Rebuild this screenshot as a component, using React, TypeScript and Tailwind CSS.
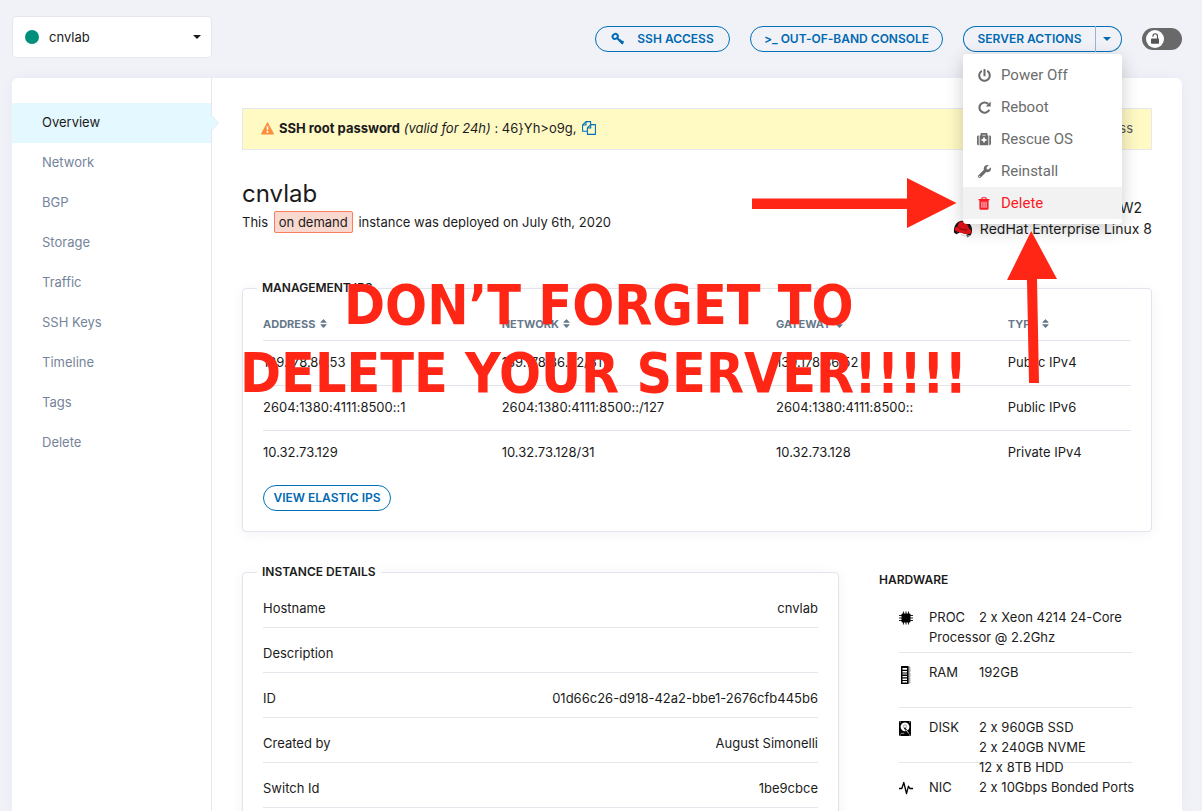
import type { ReactNode } from "react";
import { FaMedkit, FaPowerOff, FaSort, FaWrench } from "react-icons/fa";

const navItems = ["Overview", "Network", "BGP", "Storage", "Traffic", "SSH Keys", "Timeline", "Tags", "Delete"];

const addresses = [
  ["139.178.86.53", "139.178.86.52/31", "139.178.86.52", "Public IPv4"],
  ["2604:1380:4111:8500::1", "2604:1380:4111:8500::/127", "2604:1380:4111:8500::", "Public IPv6"],
  ["10.32.73.129", "10.32.73.128/31", "10.32.73.128", "Private IPv4"],
];

const details = [
  ["Hostname", "cnvlab"],
  ["Description", ""],
  ["ID", "01d66c26-d918-42a2-bbe1-2676cfb445b6"],
  ["Created by", "August Simonelli"],
  ["Switch Id", "1be9cbce"],
];

function KeyIcon() {
  return (
    <svg width="14" height="14" viewBox="0 0 14 14" fill="none" stroke="currentColor" aria-hidden="true">
      <ellipse cx="4.2" cy="4.4" rx="2.7" ry="2.3" strokeWidth="2" transform="rotate(-35 4.2 4.4)" />
      <path d="M6 6l6 5.6" strokeWidth="2.2" />
      <path d="M8.6 9.6l1.6-1.8M10.4 11.6l2-2.4" strokeWidth="1.8" />
    </svg>
  );
}

function UnlockIcon() {
  return (
    <svg width="10" height="12" viewBox="0 0 10 12" aria-hidden="true">
      <path d="M3 3.700V2.900a2.200 2.100 0 0 1 4.500 0V6" fill="none" stroke="currentColor" strokeWidth="1.200" />
      <rect x="1" y="5.600" width="8" height="5.200" rx=".7" fill="currentColor" />
    </svg>
  );
}

function RebootIcon() {
  return (
    <svg width="13" height="13" viewBox="0 0 13 13" fill="none" aria-hidden="true">
      <path d="M11.200 8.700A5.100 5.100 0 1 1 10.200 3" stroke="currentColor" strokeWidth="2.100" />
      <path d="M12.700.5v5H7.700z" fill="currentColor" />
    </svg>
  );
}

function TrashIcon() {
  return (
    <svg width="12" height="13" viewBox="0 0 12 13" fill="none" aria-hidden="true">
      <path d="M3.800 2.200V1.400q0-.7.7-.7h3q.7 0 .7.7v.8" stroke="currentColor" strokeWidth="1.100" />
      <path d="M.5 2h11v1.300h-.9v8.200q0 1.300-1.200 1.300H2.600q-1.200 0-1.200-1.300V3.300H.5z" fill="currentColor" />
      <path d="M3.900 4.800v6M6 4.800v6M8.100 4.800v6" stroke="#f2f2f2" strokeWidth=".9" />
    </svg>
  );
}

function CopyIcon() {
  return (
    <svg width="14" height="14" viewBox="0 0 14 14" fill="none" stroke="#0072bc" strokeWidth="1.100" strokeLinejoin="round" aria-hidden="true">
      <path d="M5.400 10.200H.6V4L4 .6h4.600v2.600" />
      <path d="M4 .6V4H.6" />
      <path d="M5.400 7l3.300-3.400h4.700v9.800h-8z" />
      <path d="M8.700 3.600V7H5.400" />
    </svg>
  );
}

function WarningIcon() {
  return (
    <svg width="14" height="13" viewBox="0 0 14 13" aria-hidden="true">
      <path d="M6.500 1l5.800 10.900H.7z" fill="#fd8e39" stroke="#fd8e39" strokeWidth="1.200" strokeLinejoin="round" />
      <path d="M5.600 4.200h1.800l-.3 4H5.900z" fill="#fff" />
      <circle cx="6.500" cy="10" r="1" fill="#fff" />
    </svg>
  );
}

function RedHatIcon() {
  return (
    <svg width="20" height="18" viewBox="0 0 20 18" aria-hidden="true">
      <path d="M1 12.500C.2 6 4 .8 9 .8c6.500 0 10.300 4.500 10.100 9.700-.1 2.200-.8 4-1.900 5.200l-4-1.500-6-2-4 2z" fill="#161616" />
      <path d="M1.800 9.800c-.6-2 .8-2.600 2.800-3C5 3.600 6.500 1.500 8 1.800c1.500-.9 3.500.2 5.400 1.800 1.600 1.500 2.200 3.200 2.400 4.700 2 1.200 3.300 2.700 2.700 4.200-.9 2-5.800 2-10 .6C4.900 12 2.400 11.400 1.800 9.800z" fill="#e5141b" />
      <path d="M5.500 7c1.500 1.900 5 3.300 8.500 2.900" stroke="#5a0a0c" strokeWidth=".8" fill="none" />
      <path d="M6.500 13.600l5 1.400 2.300 2.400-4.300-1.700z" fill="#ddd" />
      <path d="M13 14.800l4 1-2.500 1.700z" fill="#555" />
    </svg>
  );
}

function ChipIcon() {
  return (
    <svg width="14" height="14" viewBox="0 0 14 14" aria-hidden="true">
      <path d="M4.500.5v13M7 .5v13M9.500.5v13M0 4.500h14M0 7h14M0 9.500h14" stroke="#222" strokeWidth="1.100" />
      <rect x="2.500" y="2.500" width="9" height="9" rx="1" fill="#000" />
    </svg>
  );
}

function RamIcon() {
  return (
    <svg width="12" height="18" viewBox="0 0 12 18" aria-hidden="true">
      <path d="M9 1h2v5H9zM9 7h2v4H9zM9 12h2v5H9z" fill="#ccc" stroke="#777" strokeWidth=".6" />
      <rect x="2" y="0" width="7.500" height="18" fill="#000" />
      <path d="M3.500 2h4.500v1.800H3.500zM3.500 5h4.500v1.500H3.500zM3.500 7.500h4.500v1H3.500zM3.500 10h4.500v1.300H3.500zM3.500 12.500h4.500V14H3.500zM3.500 15h4.500v1.500H3.500z" fill="#fff" />
    </svg>
  );
}

function DiskIcon() {
  return (
    <svg width="12" height="15" viewBox="0 0 12 15" aria-hidden="true">
      <rect width="12" height="15" rx="1" fill="#000" />
      <circle cx="6" cy="5.800" r="4.400" fill="#fff" />
      <circle cx="6" cy="5.400" r="1.600" fill="none" stroke="#888" strokeWidth=".8" />
      <path d="M5.500 7l3.800 4.500" stroke="#000" strokeWidth="1.600" />
      <path d="M6.800 8.500l3 4" stroke="#fff" strokeWidth=".8" />
      <path d="M1.800 12.300h3.500" stroke="#999" strokeWidth="1" />
      <path d="M.8 1h1M10.200 1h1M.8 14h1M10.200 14h1" stroke="#fff" strokeWidth=".8" />
    </svg>
  );
}

function PulseIcon() {
  return (
    <svg width="14" height="14" viewBox="0 0 14 14" fill="none" stroke="#000" strokeWidth="1.300" strokeLinejoin="round" aria-hidden="true">
      <path d="M0 7.500h2.800L4.800 1.500l2.700 11L9.500 5.200l1.300 2.300H14" />
    </svg>
  );
}

function MenuItem({ icon, label, danger = false }: { icon: ReactNode; label: string; danger?: boolean }) {
  return (
    <li role="none">
      <button
        type="button"
        role="menuitem"
        className={`flex h-8 w-full items-center gap-[9px] pl-[13px] text-left font-['Roboto',sans-serif] text-[15px] ${
          danger ? "bg-[#f2f2f2] text-[#fb1c28]" : "text-[#6c6c6c]"
        }`}
      >
        <span className="flex w-4 justify-center">{icon}</span>
        {label}
      </button>
    </li>
  );
}

function HardwareRow({ icon, label, last = false, children }: { icon: ReactNode; label: string; last?: boolean; children: ReactNode }) {
  return (
    <li className={`flex h-[55px] ${last ? "pt-[14px] whitespace-nowrap" : "border-b border-[#e4e7eb] pt-[9px]"}`}>
      <span className="w-[30px] shrink-0 pt-1">{icon}</span>
      <div>
        <span className="inline-block w-[50px]">{label}</span>
        {children}
      </div>
    </li>
  );
}

const pill = "h-[26px] rounded-full border border-[#0070b8] text-xs font-semibold text-[#0069b1]";

export default function App() {
  return (
    <div className="relative flex h-screen flex-col gap-5 overflow-hidden bg-[#f0f2f8] pt-4 pr-5 pl-3 font-['Inter',sans-serif] text-[13px] leading-5 text-[#1b1b1b] [font-feature-settings:'calt'_0]">
      <header className="flex items-center justify-between">
        <button type="button" className="flex h-[42px] w-[200px] items-center rounded-sm border border-[#e4e7ee] bg-white px-3" aria-haspopup="listbox">
          <span className="mr-[10px] size-[14px] rounded-full bg-[#008f7c]" />
          cnvlab
          <svg className="ml-auto -mr-[2px]" width="8" height="4" viewBox="0 0 8 4" aria-hidden="true">
            <path d="M0 0h8L4 4z" fill="#1b1b1b" />
          </svg>
        </button>

        <div className="flex items-center gap-5 pt-1">
          <button type="button" className={`${pill} flex w-[135px] items-center justify-center gap-3`}>
            <KeyIcon />
            SSH ACCESS
          </button>
          <button type="button" className={`${pill} w-[193px] whitespace-nowrap`}>&gt;_ OUT-OF-BAND CONSOLE</button>
          <div className="relative flex w-[159px]">
            <button type="button" className={`${pill} flex-1 rounded-r-none border-r-0`}>SERVER ACTIONS</button>
            <button
              type="button"
              aria-label="Toggle server actions"
              aria-haspopup="menu"
              aria-expanded="true"
              className={`${pill} flex w-[27px] items-center rounded-l-none border-l-[#9fb3c8] pl-[7px]`}
            >
              <svg width="8" height="4" viewBox="0 0 8 4" aria-hidden="true">
                <path d="M0 0h8L4 4z" fill="currentColor" />
              </svg>
            </button>
            <ul role="menu" className="absolute top-7 left-0 z-10 w-full rounded-sm bg-white py-[5px] shadow-[0_5px_18px_rgba(0,0,0,0.2)]">
              <MenuItem icon={<FaPowerOff size={13} />} label="Power Off" />
              <MenuItem icon={<RebootIcon />} label="Reboot" />
              <MenuItem icon={<FaMedkit size={14} />} label="Rescue OS" />
              <MenuItem icon={<FaWrench size={13} />} label="Reinstall" />
              <MenuItem icon={<TrashIcon />} label="Delete" danger />
            </ul>
          </div>
          <button type="button" role="switch" aria-checked="false" aria-label="Lock server" className="flex h-[22px] w-10 items-center rounded-full bg-[#696969] pl-1">
            <span className="flex size-[18px] items-center justify-center rounded-full bg-white text-[#555]">
              <UnlockIcon />
            </span>
          </button>
        </div>
      </header>

      <div className="flex min-h-0 flex-1 rounded-t-md bg-white shadow-[0_0_14px_rgba(40,50,90,0.04)]">
        <nav className="w-[200px] shrink-0 border-r border-[#e4e7eb] pt-[25px]">
          <ul>
            {navItems.map((item, i) => (
              <li key={item} className="relative">
                <a
                  href="#"
                  aria-current={i === 0 ? "page" : undefined}
                  className={`flex h-10 items-center pb-[2px] pl-[30px] ${i === 0 ? "bg-[#e3f8ff] text-[#1b1b1b]" : "text-[#75849a]"}`}
                >
                  {item}
                </a>
                {i === 0 && (
                  <svg className="absolute top-3 -right-2" width="9" height="16" viewBox="0 0 9 16" aria-hidden="true">
                    <path d="M0 0h1l7.500 8L1 16H0z" fill="#e3f8ff" />
                    <path d="M1 0l7.500 8L1 16" fill="none" stroke="#dfe9f0" strokeWidth=".8" />
                  </svg>
                )}
              </li>
            ))}
          </ul>
        </nav>

        <main className="min-w-0 flex-1 overflow-hidden px-[30px] pt-[30px]">
          <div className="flex h-[42px] items-center border border-[#e6e8ef] bg-[#fff9c4] px-[18px] pb-[2px]">
            <WarningIcon />
            <p className="ml-1 mr-[5px]">
              <strong className="font-bold">SSH root password</strong> <em>(valid for 24h)</em> : 46&#125;Yh&gt;o9g,
            </p>
            <button type="button" aria-label="Copy password"><CopyIcon /></button>
            <button type="button" className="ml-auto text-[#555]">Dismiss</button>
          </div>

          <div className="mt-[30px] flex h-[98px] justify-between">
            <div>
              <h1 className="text-2xl leading-7">cnvlab</h1>
              <p className="mt-1">
                This <span className="mx-[2px] rounded-xs border border-[#fb7e5e] bg-[#f9d8d0] px-1 py-[2px]">on demand</span> instance was deployed on July 6th, 2020
              </p>
            </div>
            <div className="mt-[17px] text-right text-sm leading-[21px]">
              <p className="pr-[10px]">Dallas, TX DFW2</p>
              <p className="flex items-center gap-[7px]">
                <RedHatIcon />
                RedHat Enterprise Linux 8
              </p>
            </div>
          </div>

          <fieldset className="rounded-[4px] border border-[#e1e4ec] px-[14px] pb-5 shadow-[0_2px_14px_rgba(0,0,0,0.05)]">
            <legend className="px-[5px] text-xs leading-5 font-semibold">MANAGEMENT IPS</legend>
            <div className="px-[6px] pt-[9px]">
              <table className="w-full table-fixed text-left">
                <thead>
                  <tr className="h-[33px] border-b border-[#e1e4ec] text-[11px] text-[#66788a]">
                    <th className="w-[27.5%] pt-[2px] font-bold">ADDRESS <FaSort className="inline align-[-1px]" size={11} /></th>
                    <th className="w-[31.6%] pt-[2px] font-bold">NETWORK <FaSort className="inline align-[-1px]" size={11} /></th>
                    <th className="w-[26.7%] pt-[2px] font-bold">GATEWAY <FaSort className="inline align-[-1px]" size={11} /></th>
                    <th className="pt-[2px] font-bold">TYPE <FaSort className="inline align-[-1px]" size={11} /></th>
                  </tr>
                </thead>
                <tbody>
                  {addresses.map((row) => (
                    <tr key={row[0]} className="h-[45px] border-b border-[#e1e4ec] last:border-b-0">
                      {row.map((cell, i) => (
                        <td key={i} className="pb-[2px]">{cell}</td>
                      ))}
                    </tr>
                  ))}
                </tbody>
              </table>
              <button type="button" className={`${pill} mt-[10px] block w-32 whitespace-nowrap`}>VIEW ELASTIC IPS</button>
            </div>
          </fieldset>

          <div className="mt-[30px] flex gap-10">
            <fieldset className="min-w-0 flex-1 rounded-[4px] border border-[#e1e4ec] px-[14px] pb-5 shadow-[0_2px_14px_rgba(0,0,0,0.05)]">
              <legend className="px-[5px] text-xs leading-5 font-semibold">INSTANCE DETAILS</legend>
              <dl className="px-[6px] pt-px">
                {details.map(([name, value]) => (
                  <div key={name} className="flex h-[45px] items-center justify-between border-b border-[#e4e7eb] pt-[6px]">
                    <dt>{name}</dt>
                    <dd>{value}</dd>
                  </div>
                ))}
              </dl>
            </fieldset>

            <section className="w-[273px] shrink-0 pt-2">
              <h2 className="text-xs leading-5 font-semibold">HARDWARE</h2>
              <ul className="mx-5 mt-2">
                <HardwareRow icon={<ChipIcon />} label="PROC">2 x Xeon 4214 24-Core Processor @ 2.2Ghz</HardwareRow>
                <HardwareRow icon={<RamIcon />} label="RAM">192GB</HardwareRow>
                <HardwareRow icon={<DiskIcon />} label="DISK">
                  <span className="inline-block align-top">2 x 960GB SSD<br />2 x 240GB NVME<br />12 x 8TB HDD</span>
                </HardwareRow>
                <HardwareRow icon={<PulseIcon />} label="NIC" last>2 x 10Gbps Bonded Ports</HardwareRow>
              </ul>
            </section>
          </div>
        </main>
      </div>

      {/* Reminder drawn over the page */}
      <p className="pointer-events-none absolute top-[271px] left-[240px] z-20 font-['DejaVu_Sans_Condensed','Noto_Sans',sans-serif] text-[55px] leading-[68px] font-bold whitespace-nowrap text-[#ff2616]">
        <span className="block pl-[104px]">DON’T FORGET TO</span>
        <span className="block">DELETE YOUR SERVER!!!!!</span>
      </p>
      <svg className="pointer-events-none absolute top-[178px] left-[752px] z-20" width="205" height="50" viewBox="0 0 205 50" fill="#ff2616" aria-hidden="true">
        <path d="M0 20.500h155V0l49.500 25L155 50V31H0z" />
      </svg>
      <svg className="pointer-events-none absolute top-[231px] left-[1007px] z-20" width="50" height="153" viewBox="0 0 50 153" fill="#ff2616" aria-hidden="true">
        <path d="M24.200 0L50 48H30l2 104H22L20 49H0z" />
      </svg>
    </div>
  );
}
